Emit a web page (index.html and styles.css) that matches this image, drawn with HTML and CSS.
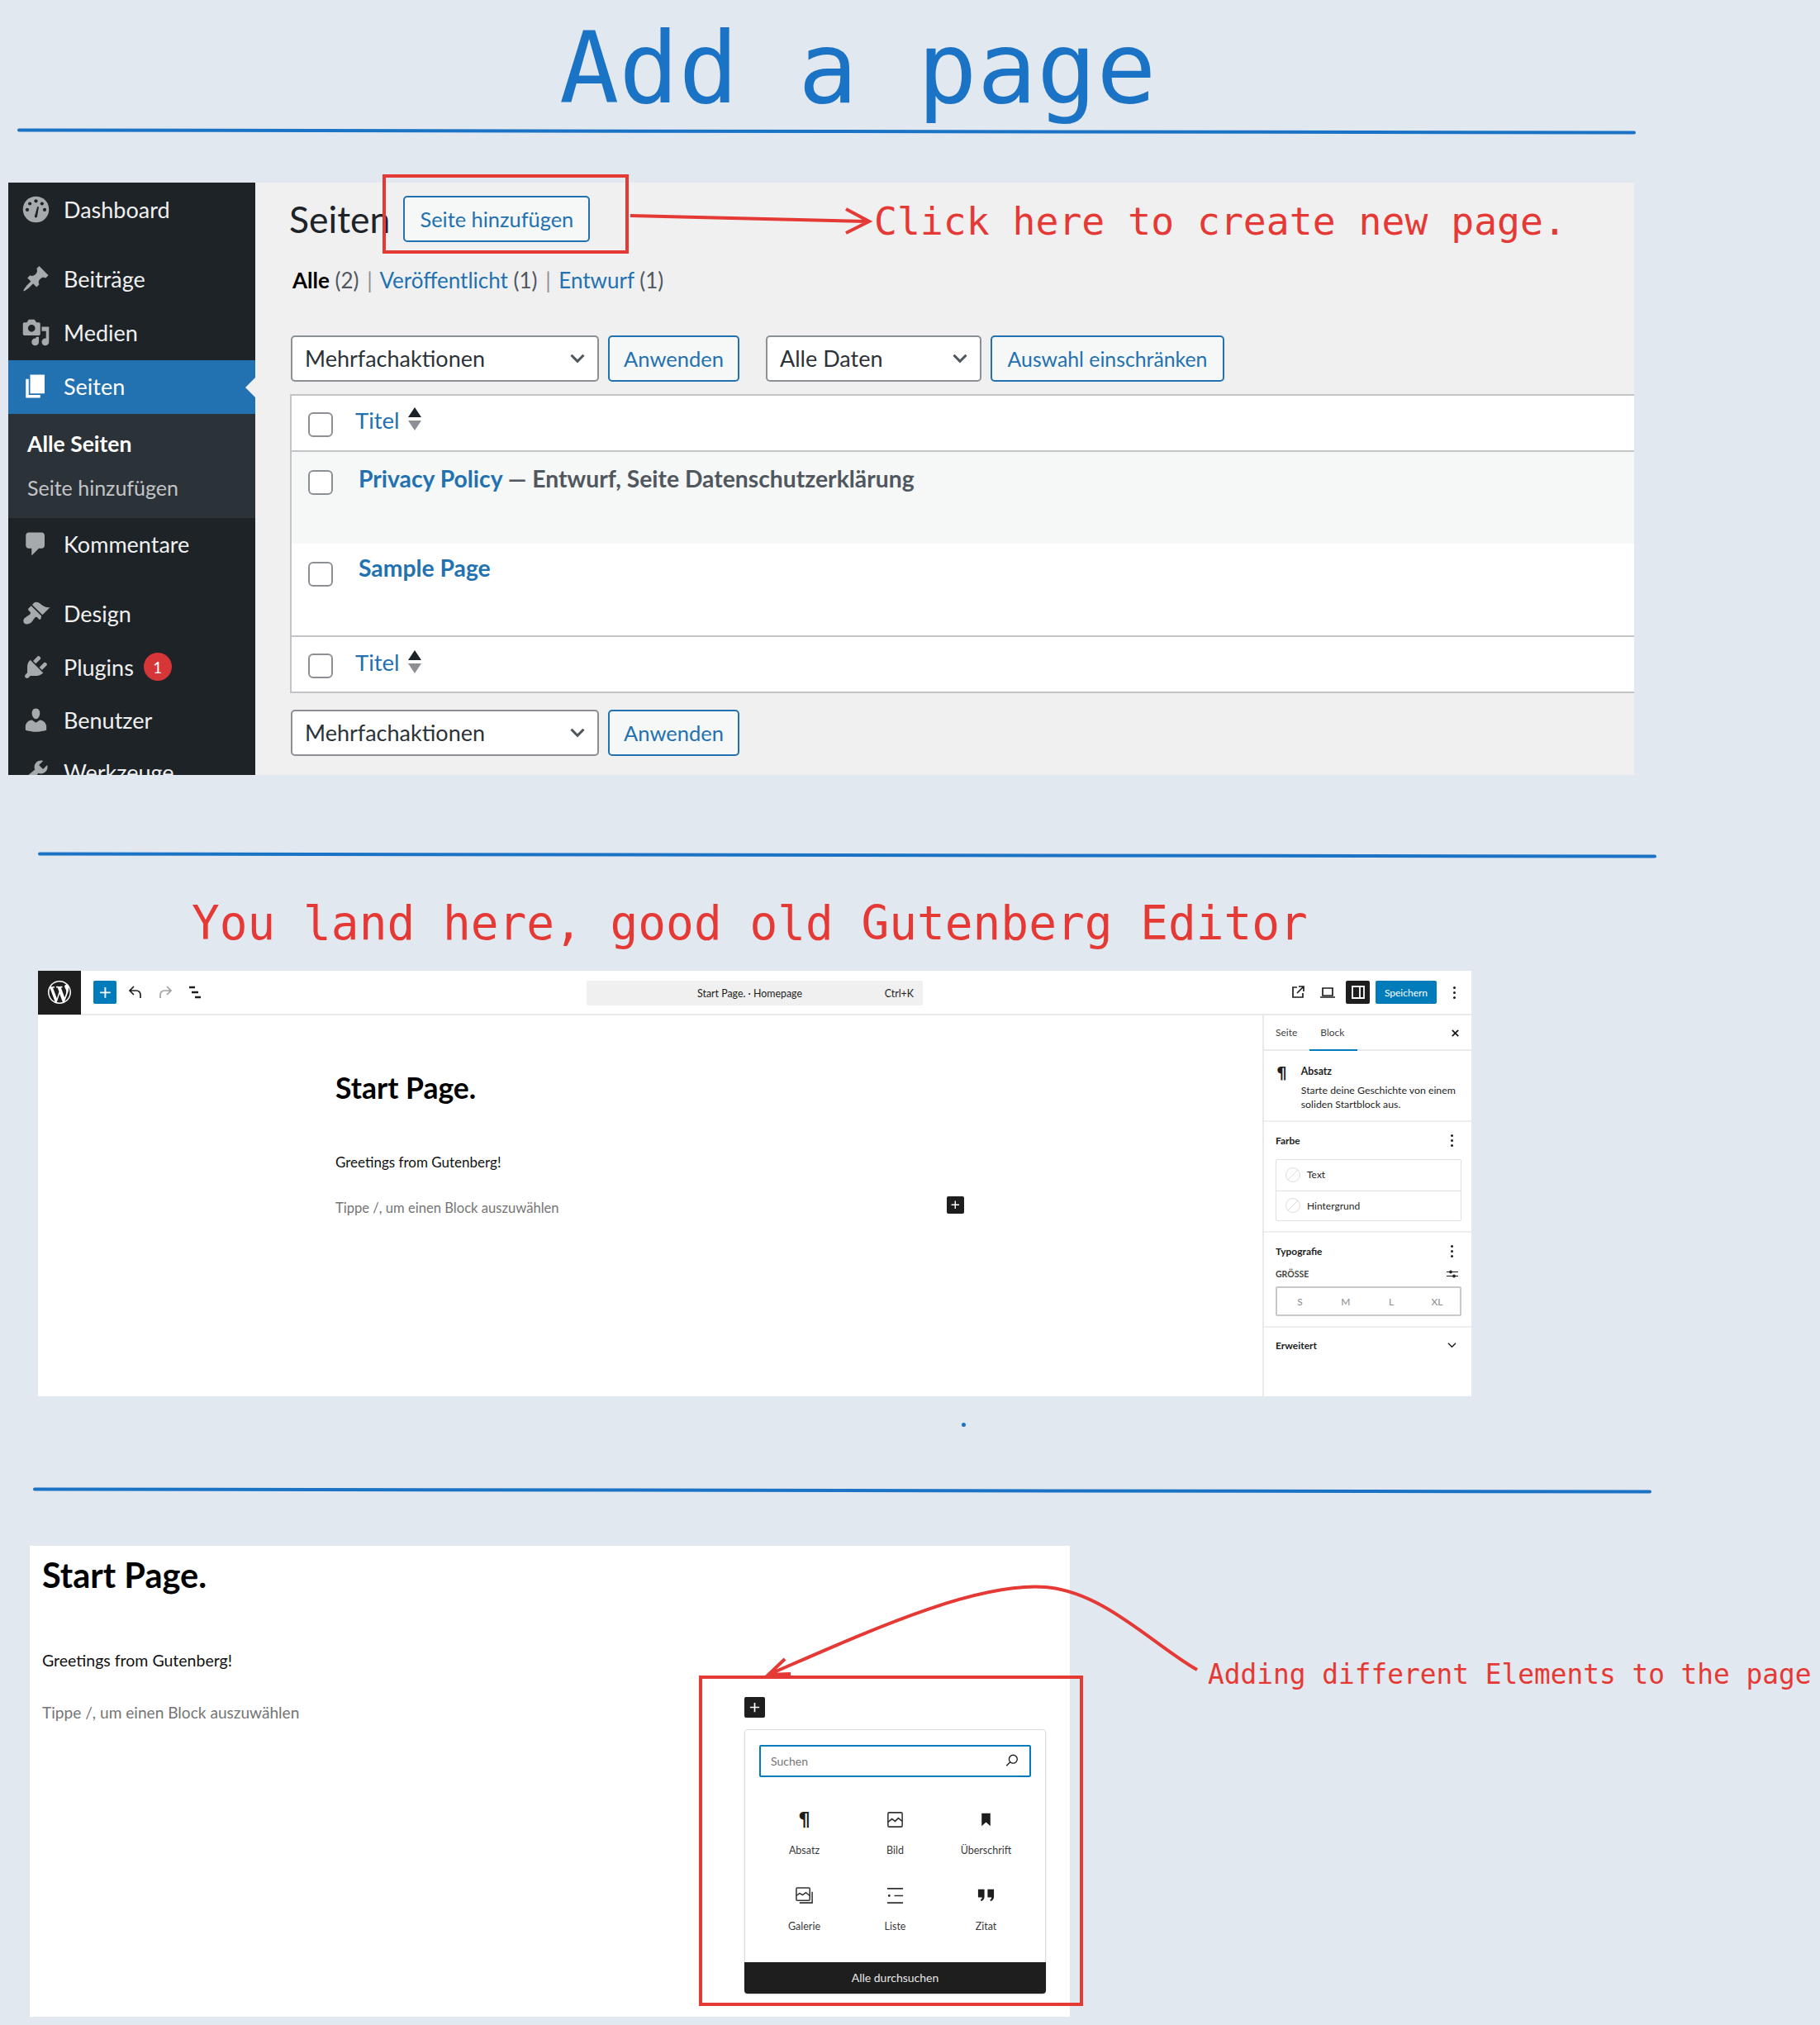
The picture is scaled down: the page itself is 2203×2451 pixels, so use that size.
FILE: index.html
```html
<!DOCTYPE html>
<html lang="de">
<head>
    <meta charset="UTF-8">
    <title>Add a page</title>
    <link rel="stylesheet" href="styles.css">
</head>
<body>
    <h1 class="title">Add a page</h1>
    <div class="rule rule-1"></div>

    <!-- step 1: page list -->
    <section class="shot admin">
        <nav class="side">
            <a class="item dash"><svg viewBox="0 0 20 20"><circle cx="10" cy="10" r="9"/><g fill="#1d2327"><circle cx="10" cy="4.2" r="1.2"/><circle cx="5.8" cy="6" r="1.2"/><circle cx="14.2" cy="6" r="1.2"/><circle cx="4" cy="10.2" r="1.2"/><circle cx="16" cy="10.2" r="1.2"/><path d="M9 15l2-7 1 .3-1.2 6.9a1 1 0 0 1-1.8-.2z"/></g></svg>Dashboard</a>
            <a class="item sep"><svg viewBox="0 0 20 20"><path d="M10.44 3.02l1.82-1.82 6.36 6.35-1.83 1.82c-1.05-.68-2.48-.57-3.41.36l-.75.75c-.92.93-1.04 2.35-.35 3.41l-1.83 1.82-2.41-2.41-2.8 2.79c-.42.42-3.38 2.71-3.8 2.29s1.86-3.39 2.28-3.81l2.79-2.79L4.1 9.36l1.83-1.82c1.05.69 2.48.57 3.4-.36l.75-.75c.93-.92 1.05-2.35.36-3.41z"/></svg>Beiträge</a>
            <a class="item"><svg viewBox="0 0 20 20"><path fill-rule="evenodd" d="M13 11V4c0-.55-.45-1-1-1h-1.67L9 1H5L3.67 3H2c-.55 0-1 .45-1 1v7c0 .55.45 1 1 1h10c.55 0 1-.45 1-1zM7 4.5c1.38 0 2.5 1.12 2.5 2.5S8.38 9.5 7 9.5 4.5 8.38 4.5 7 5.62 4.5 7 4.5zM14 6h5v10.5c0 1.38-1.12 2.5-2.5 2.5S14 17.88 14 16.5s1.12-2.5 2.5-2.5c.17 0 .34.02.5.05V9h-3V6zm-4 8.05V13h2v3.5c0 1.38-1.12 2.5-2.5 2.5S7 17.88 7 16.5 8.12 14 9.5 14c.17 0 .34.02.5.05z"/></svg>Medien</a>
            <a class="item current"><svg viewBox="0 0 20 20"><path d="M6 15V2h10v13H6zm-1 1h8v2H3V5h2v11z"/></svg>Seiten</a>
            <div class="sub">
                <a class="sub-on">Alle Seiten</a>
                <a>Seite hinzufügen</a>
            </div>
            <a class="item"><svg viewBox="0 0 20 20"><path d="M5 2h9c1.1 0 2 .9 2 2v7c0 1.100-.9 2-2 2h-2l-5 5v-5H5c-1.100 0-2-.9-2-2V4c0-1.100.9-2 2-2z"/></svg>Kommentare</a>
            <a class="item sep2"><svg viewBox="0 0 20 20"><path d="M14.48 11.06L7.41 3.99l1.500-1.500c.5-.56 2.300-.47 3.510.32 1.210.8 1.430 1.280 2.910 2.100 1.180.64 2.450 1.260 4.450.85zm-.71.71L6.700 4.700 4.930 6.470c-.39.39-.39 1.020 0 1.410l1.060 1.060c.39.39.39 1.030 0 1.420-.6.6-1.430 1.110-2.210 1.690-.35.26-.7.53-1.010.84C1.430 13.230.78 15.600 2 16.820s3.600.54 4.940-.81c.31-.31.58-.66.84-1.020.57-.78 1.090-1.610 1.690-2.210.39-.39 1.020-.39 1.410 0l1.060 1.060c.39.39 1.020.39 1.410 0z"/></svg>Design</a>
            <a class="item"><svg viewBox="0 0 20 20"><path d="M13.110 4.360L9.870 7.600 8 5.730l3.240-3.240c.35-.34 1.050-.2 1.560.32.52.51.66 1.210.31 1.550zm-8 1.770l.91-1.120 9.010 9.010-1.190.84c-.71.71-2.630 1.160-3.820 1.160H6.140L4.900 17.260c-.59.59-1.540.59-2.120 0-.59-.58-.59-1.530 0-2.120l1.240-1.240v-3.880c0-1.130.4-3.190 1.090-3.890zm7.260 3.970l3.240-3.240c.34-.35 1.040-.21 1.550.31.52.51.66 1.210.31 1.550l-3.240 3.250z"/></svg>Plugins<span class="badge">1</span></a>
            <a class="item tight"><svg viewBox="0 0 20 20"><path d="M10 9.250c-2.270 0-2.730-3.440-2.730-3.440C7 4.020 7.820 2 9.970 2c2.160 0 2.980 2.020 2.710 3.810 0 0-.41 3.440-2.680 3.440zm0 2.570L12.720 10c2.390 0 4.520 2.330 4.520 4.530v2.490s-3.650 1.130-7.240 1.130c-3.650 0-7.240-1.130-7.240-1.130v-2.490c0-2.250 1.940-4.480 4.470-4.480z"/></svg>Benutzer</a>
            <a class="item tight"><svg viewBox="0 0 20 20"><path d="M16.680 9.770c-1.340 1.340-3.300 1.670-4.950.99l-5.410 6.520c-.99.99-2.590.99-3.580 0s-.99-2.590 0-3.570l6.520-5.420c-.68-1.650-.35-3.610.99-4.950 1.280-1.280 3.120-1.620 4.720-1.060l-2.890 2.890 2.820 2.820 2.860-2.870c.53 1.580.18 3.390-1.080 4.650z"/></svg>Werkzeuge</a>
        </nav>
        <div class="list">
            <div class="list-head">
                <h2>Seiten</h2>
                <a class="btn add">Seite hinzufügen</a>
            </div>
            <p class="filters"><b>Alle</b> <i>(2)</i> <em>|</em> <a>Veröffentlicht</a> <i>(1)</i> <em>|</em> <a>Entwurf</a> <i>(1)</i></p>
            <div class="tools">
                <div class="select bulk">Mehrfachaktionen<svg viewBox="0 0 16 10"><path d="M2 2l6 6 6-6"/></svg></div>
                <a class="btn apply">Anwenden</a>
                <div class="select dates">Alle Daten<svg viewBox="0 0 16 10"><path d="M2 2l6 6 6-6"/></svg></div>
                <a class="btn limit">Auswahl einschränken</a>
            </div>
            <div class="table">
                <div class="row head"><span class="check"></span><a class="col">Titel</a><span class="sort"></span></div>
                <div class="row page odd"><span class="check"></span><p><a>Privacy Policy</a> — Entwurf, Seite Datenschutzerklärung</p></div>
                <div class="row page"><span class="check"></span><p><a>Sample Page</a></p></div>
                <div class="row foot"><span class="check"></span><a class="col">Titel</a><span class="sort"></span></div>
            </div>
            <div class="tools tools-low">
                <div class="select bulk">Mehrfachaktionen<svg viewBox="0 0 16 10"><path d="M2 2l6 6 6-6"/></svg></div>
                <a class="btn apply">Anwenden</a>
            </div>
        </div>
    </section>

    <div class="rule rule-2"></div>
    <h2 class="note land">You land here, good old Gutenberg Editor</h2>

    <!-- step 2: editor -->
    <section class="shot editor">
        <header class="ed-top">
            <div class="ed-left">
                <span class="wp"><svg viewBox="0 0 20 20"><path fill="#fff" d="M20 10c0-5.510-4.490-10-10-10C4.480 0 0 4.490 0 10c0 5.520 4.480 10 10 10 5.510 0 10-4.480 10-10zM7.780 15.370L4.370 6.220c.55-.02 1.170-.08 1.170-.08.5-.06.44-1.130-.06-1.110 0 0-1.450.11-2.370.11-.18 0-.37 0-.58-.01C4.120 2.690 6.870 1.110 10 1.110c2.330 0 4.450.87 6.050 2.340-.68-.11-1.650.39-1.650 1.580 0 .74.45 1.360.9 2.100.35.61.55 1.360.55 2.460 0 1.490-1.400 5-1.400 5l-3.030-8.370c.54-.02.82-.17.82-.17.5-.05.44-1.250-.06-1.220 0 0-1.440.12-2.380.12-.87 0-2.330-.12-2.330-.12-.5-.03-.56 1.200-.06 1.220l.92.08 1.260 3.410zM17.410 10c.24-.64.74-1.870.43-4.250.7 1.290 1.050 2.710 1.050 4.250 0 3.290-1.730 6.240-4.400 7.780.97-2.590 1.940-5.200 2.920-7.780zM6.100 18.090C3.120 16.650 1.110 13.530 1.110 10c0-1.300.23-2.480.72-3.590C3.250 10.300 4.670 14.200 6.100 18.090zm4.030-6.630l2.580 6.980c-.86.29-1.760.45-2.710.45-.79 0-1.570-.11-2.290-.33.81-2.380 1.620-4.740 2.420-7.100z"/></svg></span>
                <span class="plus blue"><svg viewBox="0 0 16 16"><path d="M8 2v12M2 8h12"/></svg></span>
                <svg class="ico" viewBox="0 0 20 20"><path d="M8 3L3 8l5 5M3 8h8a5 5 0 0 1 5 5v4"/></svg>
                <svg class="ico pale" viewBox="0 0 20 20"><path d="M12 3l5 5-5 5M17 8H9a5 5 0 0 0-5 5v4"/></svg>
                <svg class="ico" viewBox="0 0 20 20"><path d="M3 4h7M6 10h8M10 16h7" stroke-width="2.500"/></svg>
            </div>
            <div class="command"><span>Start Page. · Homepage</span><kbd>Ctrl+K</kbd></div>
            <div class="ed-right">
                <svg class="ico" viewBox="0 0 20 20"><path d="M9 4H4v12h12v-5M11 3h6v6M17 3l-8 8"/></svg>
                <svg class="ico" viewBox="0 0 20 20"><path d="M4 5h12v9H4zM1 16h18"/></svg>
                <span class="panel-on"><svg viewBox="0 0 20 20"><path d="M3 3h14v14H3zM12 3v14"/></svg></span>
                <a class="save">Speichern</a>
                <span class="dots"></span>
            </div>
        </header>
        <div class="ed-body">
            <div class="canvas">
                <h3>Start Page.</h3>
                <p class="hello">Greetings from Gutenberg!</p>
                <div class="empty">
                    <p class="hint">Tippe /, um einen Block auszuwählen</p>
                    <span class="plus black"><svg viewBox="0 0 16 16"><path d="M8 2v12M2 8h12"/></svg></span>
                </div>
            </div>
            <aside class="inspector">
                <div class="tabs"><span>Seite</span><span class="tab-on">Block</span><svg viewBox="0 0 12 12"><path d="M2 2l8 8M10 2l-8 8"/></svg></div>
                <div class="card-block">
                    <span class="pilcrow">¶</span>
                    <div><b>Absatz</b><p>Starte deine Geschichte von einem<br>soliden Startblock aus.</p></div>
                </div>
                <div class="panel colour">
                    <div class="panel-title"><b>Farbe</b><span class="dots"></span></div>
                    <div class="swatches">
                        <div><i></i>Text</div>
                        <div><i></i>Hintergrund</div>
                    </div>
                </div>
                <div class="panel type">
                    <div class="panel-title"><b>Typografie</b><span class="dots"></span></div>
                    <div class="size-label"><b>GRÖSSE</b><svg viewBox="0 0 14 10"><path d="M0 2.500h14M0 7.500h14"/><circle cx="5" cy="2.500" r="1.500"/><circle cx="9" cy="7.500" r="1.500"/></svg></div>
                    <div class="sizes"><span>S</span><span>M</span><span>L</span><span>XL</span></div>
                </div>
                <div class="panel-title more"><b>Erweitert</b><svg viewBox="0 0 12 8"><path d="M1 1.500l5 5 5-5"/></svg></div>
            </aside>
        </div>
    </section>
    <div class="dot"></div>

    <div class="rule rule-3"></div>

    <!-- step 3: block inserter -->
    <section class="shot inserter">
        <div class="ins-text">
            <h3>Start Page.</h3>
            <p class="hello">Greetings from Gutenberg!</p>
            <p class="hint">Tippe /, um einen Block auszuwählen</p>
        </div>
        <div class="ins-col">
            <span class="plus black"><svg viewBox="0 0 16 16"><path d="M8 2v12M2 8h12"/></svg></span>
            <div class="popup">
                <div class="search">Suchen<svg viewBox="0 0 20 20"><circle cx="11.500" cy="8" r="5.500"/><path d="M7.500 12l-5 5"/></svg></div>
                <div class="blocks">
                    <div><span class="pilcrow">¶</span>Absatz</div>
                    <div><svg viewBox="0 0 24 24"><rect x="3" y="3" width="18" height="18" rx="1.500"/><path d="M3 15l5-4 4 3 4-4 5 4"/></svg>Bild</div>
                    <div><svg class="solid" viewBox="0 0 24 24"><path d="M6.500 4h11v16l-5.500-5-5.500 5z"/></svg>Überschrift</div>
                    <div><svg viewBox="0 0 24 24"><rect x="2" y="2" width="17" height="16" rx="1"/><path d="M2 12l4-3 4 2 4-3 5 4M22 7v14H6"/></svg>Galerie</div>
                    <div><svg viewBox="0 0 24 24"><path d="M2 3h20M2 21h20M11 12h11"/><circle class="blob" cx="4.500" cy="12" r="1.500"/></svg>Liste</div>
                    <div><svg class="solid" viewBox="0 0 24 24"><path d="M2 4h8v9c0 3-1.500 5-4 6l-1-2c1.500-.6 2-1.500 2-3H2zM14 4h8v9c0 3-1.500 5-4 6l-1-2c1.500-.6 2-1.500 2-3h-5z"/></svg>Zitat</div>
                </div>
                <a class="browse">Alle durchsuchen</a>
            </div>
        </div>
    </section>

    <!-- red annotations drawn over the screenshots -->
    <p class="note click">Click here to create new page.</p>
    <p class="note adding">Adding different Elements to the page</p>
    <svg class="marks" viewBox="0 0 2203 2451">
        <rect x="465" y="213" width="294" height="92" stroke-width="4"/>
        <path d="M763 261L1050 268M1024 253l28 15-28 14" stroke-width="4"/>
        <rect x="848" y="2030" width="461" height="396" stroke-width="4"/>
        <path d="M930 2027C1050 1975 1180 1915 1265 1921C1335 1926 1395 1990 1449 2021M950 2008L930 2027L957 2026" stroke-width="4"/>
    </svg>
</body>
</html>
```

FILE: styles.css
```css
* {
    box-sizing: border-box;
}
body {
    margin: 0;
    position: relative;
    height: 2451px;
    overflow: hidden;
    background: #e2e8f0;
    font-family: Lato, "Noto Sans", sans-serif;
    color: #1d2327;
}
a {
    color: #2271b1;
}
p, h1, h2, h3 {
    margin: 0;
}
svg {
    display: block;
    flex: none;
}

/* hand written bits */
.title {
    height: 157px;
    padding: 8px 0 0 677px;
    font: 400 120px/150px "DejaVu Sans Mono", monospace;
    color: #1a73c4;
    white-space: nowrap;
}
.rule {
    height: 4px;
    width: 1959px;
    background: #1a73c4;
    border-radius: 2px;
    transform: rotate(0.09deg);
}
.rule-1 {
    margin-left: 21px;
}
.rule-2 {
    margin: 95px 0 0 46px;
}
.rule-3 {
    margin: 0 0 0 40px;
}
.note {
    font-family: "DejaVu Sans Mono", monospace;
    font-weight: 400;
    color: #e53935;
    white-space: nowrap;
}
.land {
    height: 138px;
    padding: 43px 0 0 232px;
    font-size: 56.100px;
    line-height: 76px;
}
.click {
    position: absolute;
    left: 1058px;
    top: 238px;
    font-size: 46.400px;
    line-height: 60px;
}
.adding {
    position: absolute;
    left: 1462px;
    top: 2005px;
    font-size: 32.800px;
    line-height: 44px;
}
.marks {
    position: absolute;
    left: 0;
    top: 0;
    width: 2203px;
    height: 2451px;
    fill: none;
    stroke: #e53935;
}
.shot {
    background: #fff;
    overflow: hidden;
}

/* admin list */
.admin {
    display: flex;
    margin: 60px 0 0 10px;
    width: 1968px;
    height: 717px;
    background: #f0f0f1;
}
.side {
    width: 299px;
    flex: none;
    background: #1d2327;
    color: #f0f0f1;
    font-size: 27px;
}
.item {
    display: flex;
    align-items: center;
    height: 65px;
    gap: 16px;
    padding: 0 0 3px 16px;
    color: #f0f0f1;
}
.item svg {
    width: 35px;
    height: 35px;
    fill: #a7aaad;
}
.dash {
    height: 68px;
}
.sep {
    margin-top: 17px;
}
.sep2 {
    margin-top: 19px;
}
.tight {
    height: 63px;
}
.current {
    position: relative;
    background: #2271b1;
    color: #fff;
}
.current svg {
    fill: #fff;
}
.current::after {
    content: "";
    position: absolute;
    right: 0;
    top: 21px;
    border: 12px solid transparent;
    border-right-color: #f0f0f1;
    border-left: 0;
}
.sub {
    height: 126px;
    padding: 16px 0 0 23px;
    background: #2c3338;
    font-size: 25px;
}
.sub a {
    display: block;
    height: 53px;
    line-height: 40px;
    color: #c3c4c7;
}
.sub .sub-on {
    color: #fff;
    font-size: 26.500px;
    font-weight: 700;
}
.badge {
    display: flex;
    align-items: center;
    justify-content: center;
    width: 34px;
    height: 34px;
    margin-left: -4px;
    border-radius: 50%;
    background: #d63638;
    color: #fff;
    font-size: 19px;
}
.list {
    flex: 1;
    padding-left: 42px;
    min-width: 0;
    font-size: 28px;
}
.list-head {
    display: flex;
    align-items: center;
    gap: 16px;
    height: 85px;
    padding-top: 2px;
}
.list-head h2 {
    margin-left: -1px;
    font-size: 44.500px;
    font-weight: 400;
}
.btn {
    display: flex;
    align-items: center;
    justify-content: center;
    height: 56px;
    border: 2px solid #2271b1;
    border-radius: 5px;
    background: #f6f7f7;
    font-size: 25.500px;
}
.add {
    width: 226px;
    font-size: 25.400px;
}
.filters {
    height: 100px;
    padding: 15px 0 0 3px;
    font-size: 26px;
    line-height: 36px;
    white-space: pre-wrap;
}
.filters i {
    font-style: normal;
    color: #50575e;
}
.filters em {
    margin: 0 3px;
    font-style: normal;
    color: #8c8f94;
}
.filters b {
    color: #000;
}
.tools {
    display: flex;
    gap: 11px;
    padding-left: 1px;
}
.select {
    display: flex;
    align-items: center;
    justify-content: space-between;
    height: 56px;
    padding: 0 14px 2px 15px;
    border: 2px solid #8c8f94;
    border-radius: 5px;
    background: #fff;
    font-size: 27px;
    color: #2c3338;
}
.select svg {
    width: 20px;
    height: 13px;
    fill: none;
    stroke: #50575e;
    stroke-width: 2.500;
}
.bulk {
    width: 373px;
}
.apply {
    width: 159px;
}
.dates {
    width: 261px;
    margin-left: 21px;
}
.limit {
    width: 283px;
    font-size: 24.800px;
}
.table {
    margin-top: 15px;
    margin-right: 0;
    border: 2px solid #c3c4c7;
    border-right: 0;
    background: #fff;
}
.row {
    display: flex;
    padding-left: 20px;
}
.head {
    align-items: center;
    gap: 27px;
    height: 68px;
    border-bottom: 2px solid #c3c4c7;
}
.foot {
    align-items: center;
    gap: 27px;
    height: 68px;
    border-top: 2px solid #c3c4c7;
}
.foot .col, .foot .sort {
    margin-top: 3px;
}
.check {
    display: block;
    width: 30px;
    height: 30px;
    flex: none;
    margin-top: 4px;
    border: 2px solid #8c8f94;
    border-radius: 6px;
    background: #fff;
}
.col {
    position: relative;
    top: -4px;
    font-size: 27.500px;
    margin-right: -17px;
}
.sort {
    position: relative;
    top: -5px;
    width: 16px;
    height: 28px;
}
.sort::before, .sort::after {
    content: "";
    position: absolute;
    left: 0;
    border: 8px solid transparent;
    border-top: 0;
    border-bottom: 12px solid #1d2327;
}
.sort::before {
    top: 0;
}
.sort::after {
    bottom: 0;
    transform: scaleY(-1);
    border-bottom-color: #8c8f94;
}
.page {
    height: 111px;
    gap: 31px;
    padding-top: 22px;
}
.page .check {
    margin-top: 0;
}
.page p {
    position: relative;
    top: -13px;
    font-size: 28.300px;
    line-height: 40px;
    font-weight: 700;
    color: #50575e;
    white-space: nowrap;
}
.odd {
    background: #f6f7f7;
}
.odd p {
    top: -10px;
}
.tools-low {
    margin-top: 20px;
}

/* editor */
.editor {
    margin-left: 46px;
    width: 1735px;
    height: 515px;
}
.ed-top {
    position: relative;
    display: flex;
    align-items: center;
    justify-content: space-between;
    height: 54px;
    border-bottom: 2px solid #e9e9e9;
}
.ed-left, .ed-right {
    display: flex;
    align-items: center;
}
.wp {
    display: flex;
    align-items: center;
    justify-content: center;
    width: 52px;
    height: 54px;
    margin-right: 15px;
    background: #1e1e1e;
}
.wp svg {
    width: 28px;
    height: 28px;
}
.plus {
    display: flex;
    align-items: center;
    justify-content: center;
    border-radius: 2px;
}
.plus svg {
    width: 60%;
    height: 60%;
    fill: none;
    stroke: #fff;
    stroke-width: 1.800;
}
.blue {
    width: 28px;
    height: 28px;
    background: #007cba;
}
.black {
    background: #1e1e1e;
}
.ico {
    width: 20px;
    height: 20px;
    margin-left: 13px;
    fill: none;
    stroke: #1e1e1e;
    stroke-width: 1.700;
}
.ed-left .ico + .ico {
    margin-left: 16px;
}
.ed-left .plus + .ico {
    margin-left: 13px;
}
.pale {
    stroke: #a0a0a0;
}
.command {
    position: absolute;
    left: 664px;
    top: 12px;
    display: flex;
    align-items: center;
    justify-content: center;
    width: 407px;
    height: 30px;
    padding-right: 12px;
    border-radius: 2px;
    background: #f0f0f0;
    font-size: 12.400px;
    color: #1e1e1e;
}
.command kbd {
    position: absolute;
    right: 11px;
    font: inherit;
}
.ed-right .ico {
    margin: 0 0 0 16px;
}
.panel-on {
    display: flex;
    align-items: center;
    justify-content: center;
    width: 29px;
    height: 28px;
    margin-left: 12px;
    border-radius: 2px;
    background: #1e1e1e;
}
.panel-on svg {
    width: 20px;
    height: 20px;
    fill: none;
    stroke: #fff;
    stroke-width: 1.800;
}
.save {
    display: flex;
    align-items: center;
    justify-content: center;
    width: 74px;
    height: 28px;
    margin-left: 7px;
    border-radius: 2px;
    background: #007cba;
    color: #fff;
    font-size: 12px;
}
.dots {
    position: relative;
    display: block;
    width: 3px;
    height: 3px;
    border-radius: 50%;
    background: #1e1e1e;
    box-shadow: 0 -6px 0 #1e1e1e, 0 6px 0 #1e1e1e;
}
.ed-right .dots {
    margin: 0 19px 0 20px;
}
.ed-body {
    display: flex;
    height: 461px;
}
.canvas {
    flex: 1;
    padding: 68px 0 0 360px;
}
.canvas h3 {
    color: #000;
    font-size: 35.500px;
    line-height: 40px;
}
.canvas .hello {
    margin-top: 58px;
    font-size: 17px;
    line-height: 24px;
    color: #111;
}
.empty {
    display: flex;
    align-items: center;
    justify-content: space-between;
    width: 761px;
    margin-top: 31px;
}
.hint {
    font-size: 16.600px;
    line-height: 24px;
    color: #757575;
}
.empty .black {
    width: 21px;
    height: 21px;
    margin-top: -8px;
}
.inspector {
    width: 253px;
    flex: none;
    border-left: 2px solid #e9e9e9;
    font-size: 12px;
    color: #1e1e1e;
}
.tabs {
    position: relative;
    display: flex;
    align-items: center;
    gap: 28px;
    height: 43px;
    padding-left: 14px;
    border-bottom: 2px solid #e9e9e9;
    color: #444;
}
.tab-on::after {
    content: "";
    position: absolute;
    left: 55px;
    bottom: -2px;
    width: 58px;
    height: 2px;
    background: #007cba;
}
.tabs svg {
    position: absolute;
    right: 14px;
    top: 16px;
    width: 11px;
    height: 11px;
    fill: none;
    stroke: #1e1e1e;
    stroke-width: 2;
}
.card-block {
    display: flex;
    height: 86px;
    padding: 16px 0 0 15px;
    gap: 17px;
    border-bottom: 2px solid #eee;
}
.card-block b {
    font-size: 12.300px;
    line-height: 18px;
}
.card-block p {
    margin-top: 5px;
    line-height: 17px;
    font-size: 12.300px;
    white-space: nowrap;
}
.pilcrow {
    font: 700 20px/20px "DejaVu Sans", sans-serif;
    color: #1e1e1e;
}
.panel {
    padding: 0 12px 0 14px;
    border-bottom: 2px solid #eee;
}
.colour {
    height: 134px;
}
.type {
    height: 115px;
}
.panel-title {
    display: flex;
    align-items: center;
    justify-content: space-between;
    height: 45px;
    padding-right: 10px;
}
.swatches {
    border: 1px solid #e0e0e0;
    border-radius: 2px;
    height: 75px;
}
.swatches div {
    display: flex;
    align-items: center;
    gap: 8px;
    height: 37px;
    padding: 0 0 2px 11px;
}
.swatches div + div {
    border-top: 1px solid #e0e0e0;
}
.swatches i {
    width: 18px;
    height: 18px;
    border: 1px solid #ddd;
    border-radius: 50%;
    background: linear-gradient(135deg, transparent 48%, #ddd 48%, #ddd 53%, transparent 53%);
}
.size-label {
    display: flex;
    align-items: center;
    justify-content: space-between;
    margin-top: -7px;
    height: 24px;
    padding-right: 4px;
    font-size: 10.500px;
    color: #444;
}
.size-label svg {
    width: 14px;
    height: 10px;
    fill: #1e1e1e;
    stroke: #1e1e1e;
    stroke-width: 1;
}
.sizes {
    display: grid;
    grid-template-columns: repeat(4, 1fr);
    align-items: center;
    justify-items: center;
    height: 36px;
    margin-top: 3px;
    border: 2px solid #c8c8c8;
    border-radius: 2px;
    color: #8c8c8c;
}
.more {
    padding: 0 18px 0 14px;
    height: 42px;
}
.more svg {
    width: 11px;
    height: 8px;
    fill: none;
    stroke: #1e1e1e;
    stroke-width: 1.500;
}
.dot {
    width: 5px;
    height: 5px;
    margin: 32px 0 75px 1164px;
    border-radius: 50%;
    background: #1a73c4;
}

/* inserter */
.inserter {
    display: flex;
    margin: 65px 0 0 36px;
    width: 1259px;
    height: 570px;
}
.ins-text {
    width: 865px;
    flex: none;
    padding: 11px 0 0 15px;
}
.ins-text h3 {
    color: #000;
    font-size: 41.500px;
    line-height: 48px;
}
.ins-text .hello {
    margin-top: 66px;
    font-size: 19.500px;
    line-height: 28px;
    color: #111;
}
.ins-text .hint {
    margin-top: 35px;
    font-size: 19.100px;
    line-height: 28px;
}
.ins-col {
    padding-top: 183px;
}
.ins-col > .black {
    width: 25px;
    height: 25px;
}
.popup {
    width: 365px;
    height: 320px;
    margin-top: 14px;
    padding: 18px 0 0;
    border: 1px solid #ddd;
    border-radius: 4px;
    display: flex;
    flex-direction: column;
    align-items: center;
    box-shadow: 0 1px 2px rgba(0, 0, 0, 0.15);
    font-size: 12.500px;
    color: #3a3a3a;
}
.search {
    display: flex;
    align-items: center;
    justify-content: space-between;
    width: 329px;
    height: 42px;
    padding: 0 12px;
    border: 2px solid #007cba;
    border-radius: 2px;
    color: #757575;
    font-size: 14px;
}
.search svg {
    width: 18px;
    height: 18px;
    fill: none;
    stroke: #1e1e1e;
    stroke-width: 1.500;
}
.blocks {
    display: grid;
    grid-template-columns: repeat(3, 110px);
    grid-auto-rows: 92px;
    margin-top: 40px;
    flex: 1;
}
.blocks div {
    display: flex;
    flex-direction: column;
    align-items: center;
    gap: 18px;
}
.blocks svg {
    width: 23px;
    height: 23px;
    fill: none;
    stroke: #333;
    stroke-width: 1.600;
}
.blocks .pilcrow {
    height: 23px;
    font-size: 23px;
    line-height: 23px;
}
.blocks .solid {
    fill: #1e1e1e;
    stroke: none;
}
.blob {
    fill: #333;
    stroke: none;
}
.browse {
    display: flex;
    align-items: center;
    justify-content: center;
    align-self: stretch;
    height: 42px;
    margin: 0 -1px -1px;
    border-radius: 0 0 4px 4px;
    background: #1e1e1e;
    color: #e8e8e8;
    font-size: 14px;
}
```
